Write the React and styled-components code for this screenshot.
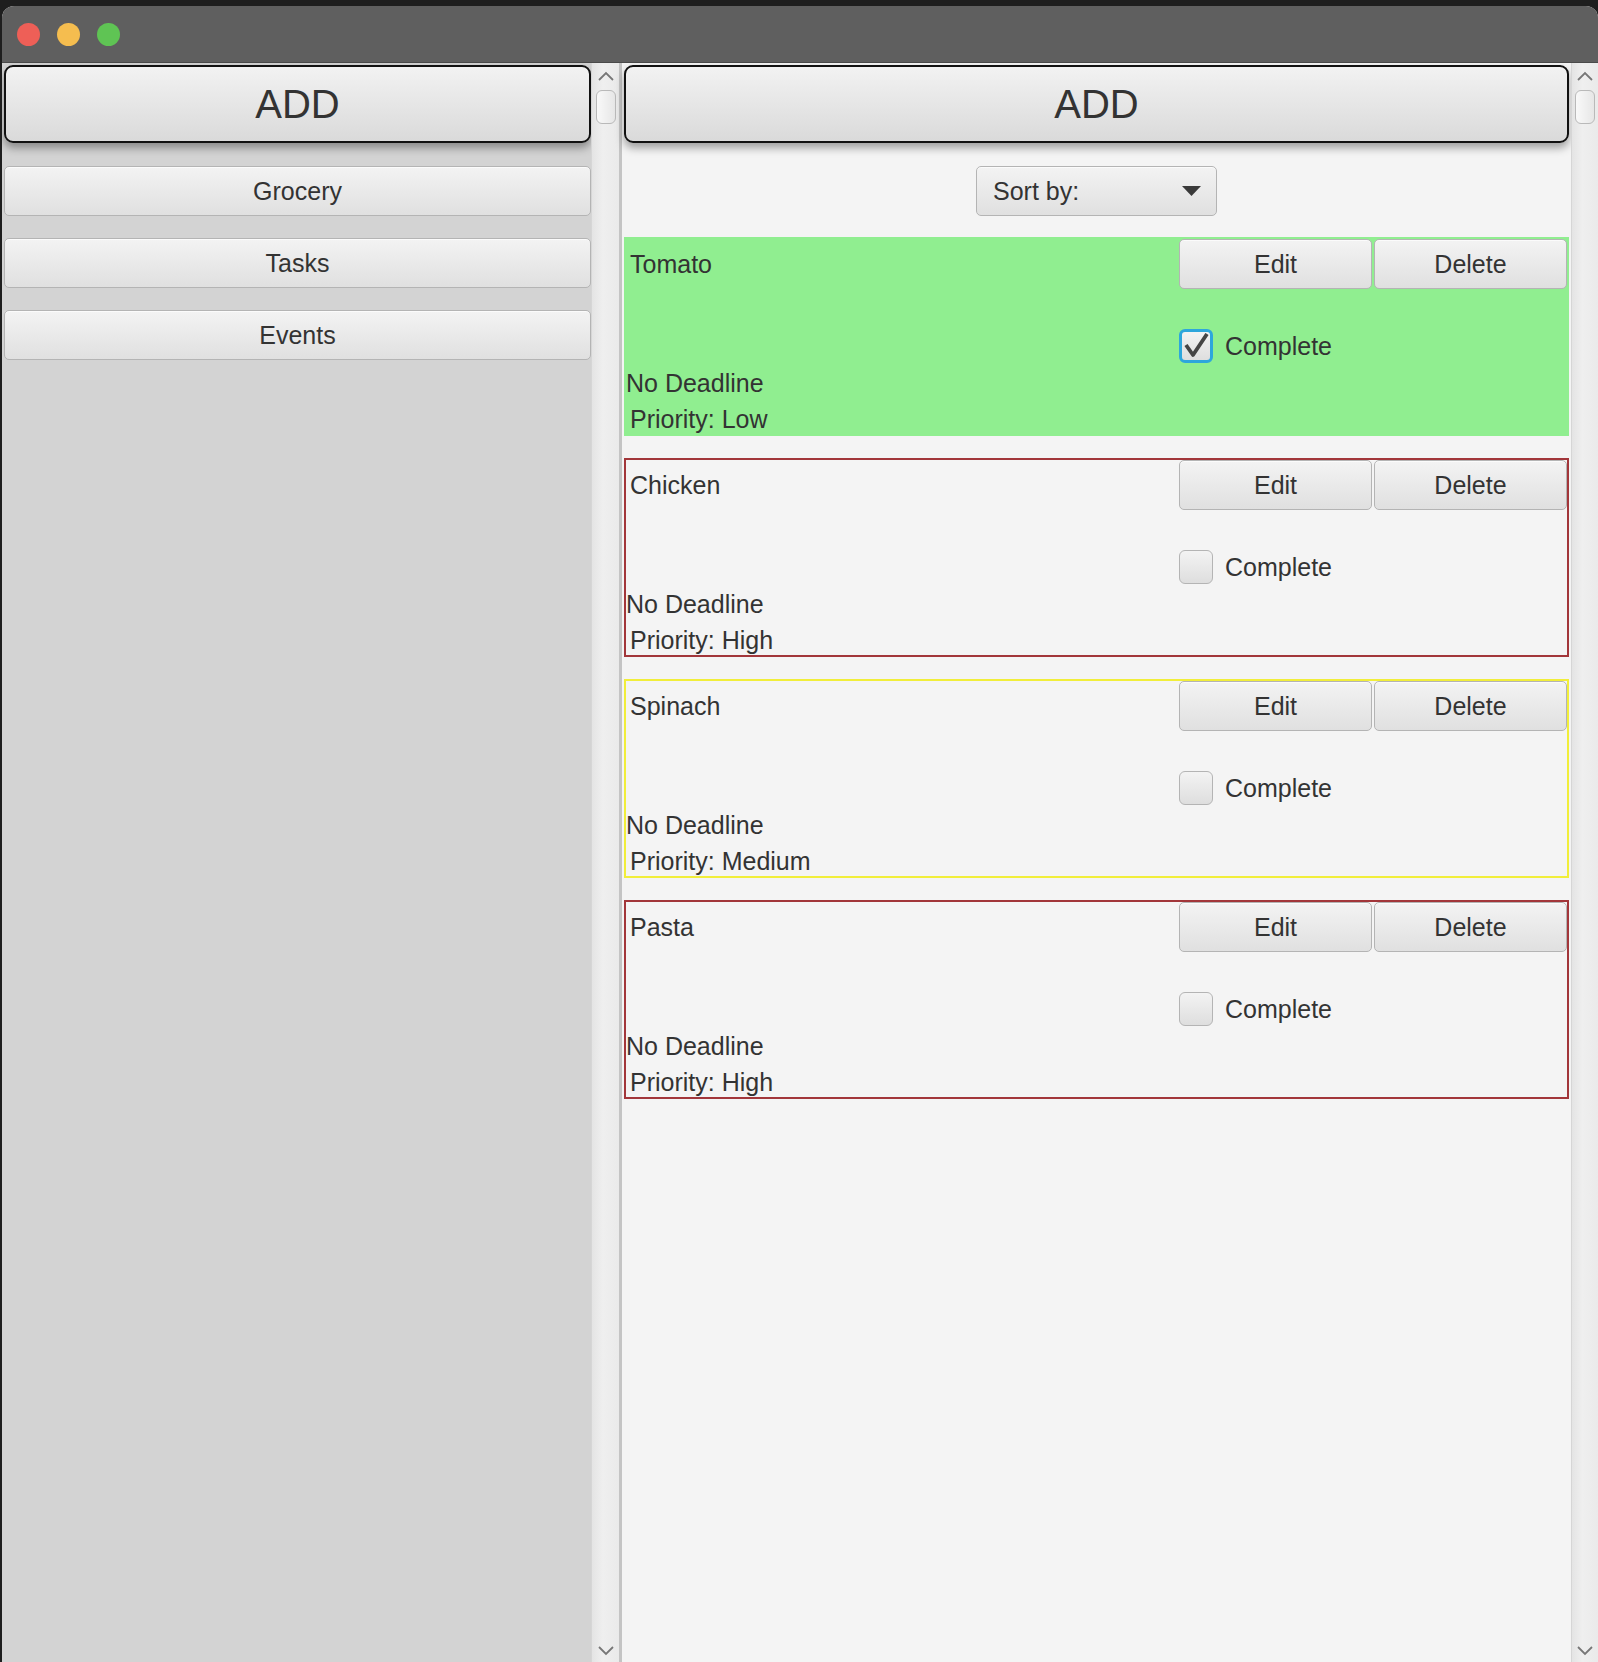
import React from 'react';
import styled, { createGlobalStyle } from 'styled-components';

const GlobalStyle = createGlobalStyle`
  html, body {
    margin: 0;
    padding: 0;
    background: #1e1e1e;
  }
  body {
    font-family: "Liberation Sans", Arial, sans-serif;
    color: #333;
    overflow: hidden;
  }
`;

const items = [
  { name: 'Tomato', deadline: 'No Deadline', priority: 'Low', done: true },
  { name: 'Chicken', deadline: 'No Deadline', priority: 'High', done: false },
  { name: 'Spinach', deadline: 'No Deadline', priority: 'Medium', done: false },
  { name: 'Pasta', deadline: 'No Deadline', priority: 'High', done: false },
];

const priorityColors = {
  High: '#a2363a',
  Medium: '#f1ee3a',
  Low: '#90ee90',
};

const App = () => {
  return (
    <>
      <GlobalStyle />
      <Window>
        <TitleBar>
          <Light color="#ee5f57" />
          <Light color="#f5bd4f" />
          <Light color="#5fc454" />
        </TitleBar>
        <Body>
          <LeftPane>
            <AddButton>ADD</AddButton>
            <ListButtons>
              <ListButton>Grocery</ListButton>
              <ListButton>Tasks</ListButton>
              <ListButton>Events</ListButton>
            </ListButtons>
          </LeftPane>
          <ScrollBar />
          <RightPane>
            <AddButton>ADD</AddButton>
            <SortRow>
              <Combo>
                <span>Sort by:</span>
                <svg width="19" height="10" viewBox="0 0 19 10">
                  <path d="M0 0 L19 0 L9.5 10 Z" fill="#3a3a3a" />
                </svg>
              </Combo>
            </SortRow>
            <CardList>
              {items.map(item => (
                <Card
                  key={item.name}
                  $done={item.done}
                  $edge={item.done ? '#90ee90' : priorityColors[item.priority]}
                >
                  <ItemName>{item.name}</ItemName>
                  <CardButton>Edit</CardButton>
                  <CardButton>Delete</CardButton>
                  <CheckRow>
                    <CheckBox $checked={item.done}>
                      {item.done && (
                        <svg width="26" height="26" viewBox="0 0 26 26">
                          <path
                            d="M3 12 L10 22 L24 1"
                            fill="none"
                            stroke="#454545"
                            strokeWidth="3.8"
                            strokeLinejoin="round"
                          />
                        </svg>
                      )}
                    </CheckBox>
                    <CheckLabel>Complete</CheckLabel>
                  </CheckRow>
                  <Deadline>{item.deadline}</Deadline>
                  <Priority>Priority: {item.priority}</Priority>
                </Card>
              ))}
            </CardList>
          </RightPane>
          <ScrollBar $narrow />
        </Body>
      </Window>
    </>
  );
};

const ScrollBar = ({ $narrow }) => (
  <Track $narrow={$narrow}>
    <Chevron width="18" height="10" viewBox="0 0 18 10">
      <path d="M2 9 L9 2 L16 9" fill="none" stroke="#777" strokeWidth="1.8" />
    </Chevron>
    <Thumb />
    <Spacer />
    <Chevron width="18" height="10" viewBox="0 0 18 10">
      <path d="M2 1 L9 8 L16 1" fill="none" stroke="#777" strokeWidth="1.8" />
    </Chevron>
  </Track>
);

export default App;

const Window = styled.div`
  margin: 6px 0 0 2px;
  width: 1596px;
  height: 1656px;
  border-radius: 12px 12px 0 0;
  overflow: hidden;
  display: flex;
  flex-direction: column;
  background: #f4f4f4;
`;

const TitleBar = styled.div`
  height: 57px;
  flex-shrink: 0;
  background: #5f5f5f;
  border-bottom: 1px solid #4a4a4a;
  box-sizing: border-box;
  display: flex;
  align-items: center;
  gap: 17px;
  padding: 0 0 0 15px;
`;

const Light = styled.div`
  width: 23px;
  height: 23px;
  border-radius: 50%;
  background: ${p => p.color};
`;

const Body = styled.div`
  flex: 1;
  display: flex;
  min-height: 0;
`;

const LeftPane = styled.div`
  width: 589px;
  flex-shrink: 0;
  background: #d3d3d3;
  box-sizing: border-box;
  padding: 2px 0 0 2px;
  display: flex;
  flex-direction: column;
`;

const RightPane = styled.div`
  width: 952px;
  flex-shrink: 0;
  box-sizing: border-box;
  background: #f4f4f4;
  border-left: 3px solid #c4c4c4;
  padding: 2px 2px 0 2px;
  display: flex;
  flex-direction: column;
`;

const AddButton = styled.button`
  height: 78px;
  width: 100%;
  box-sizing: border-box;
  border: 2px solid #111;
  border-radius: 9px;
  background: linear-gradient(#f2f2f2, #dadada);
  box-shadow: 0 5px 8px rgba(0, 0, 0, 0.35);
  font-family: "Liberation Sans", Arial, sans-serif;
  font-size: 40px;
  color: #333;
  padding: 0;
`;

const ListButtons = styled.div`
  display: flex;
  flex-direction: column;
  gap: 22px;
  margin-top: 23px;
`;

const buttonLook = `
  box-sizing: border-box;
  border: 1px solid #b4b4b4;
  border-radius: 5px;
  background: linear-gradient(#f3f3f3, #e0e0e0);
  box-shadow: inset 0 1px 0 #fbfbfb;
  font-family: "Liberation Sans", Arial, sans-serif;
  font-size: 25px;
  color: #333;
`;

const ListButton = styled.button`
  ${buttonLook}
  height: 50px;
  width: 100%;
  padding: 0;
`;

const SortRow = styled.div`
  display: flex;
  justify-content: center;
  margin-top: 23px;
`;

const Combo = styled.div`
  ${buttonLook}
  width: 241px;
  height: 50px;
  display: flex;
  align-items: center;
  justify-content: space-between;
  padding: 0 15px 0 16px;
`;

const CardList = styled.div`
  display: flex;
  flex-direction: column;
  gap: 22px;
  margin-top: 21px;
`;

const Card = styled.div`
  box-sizing: border-box;
  height: 199px;
  border: 2px solid ${p => p.$edge};
  background: ${p => (p.$done ? '#90ee90' : 'transparent')};
  display: grid;
  grid-template-columns: 1fr 193px 193px;
  grid-template-rows: 50px auto auto auto;
  column-gap: 2px;
  align-content: start;
  font-size: 25px;
`;

const ItemName = styled.div`
  align-self: center;
  padding-left: 4px;
`;

const CardButton = styled.button`
  ${buttonLook}
  height: 50px;
  padding: 0;
`;

const CheckRow = styled.div`
  grid-column: 2 / 4;
  display: flex;
  align-items: center;
  gap: 12px;
  margin-top: 40px;
`;

const CheckBox = styled.div`
  width: 34px;
  height: 34px;
  box-sizing: border-box;
  border-radius: 6px;
  background: linear-gradient(#f3f3f3, #dedede);
  border: ${p => (p.$checked ? '3px solid #2ea6dc' : '1px solid #b4b4b4')};
  display: flex;
  align-items: center;
  justify-content: center;
`;

const CheckLabel = styled.span`
  line-height: 34px;
`;

const Deadline = styled.div`
  grid-column: 1 / 4;
  line-height: 34px;
  margin-top: 3px;
`;

const Priority = styled.div`
  grid-column: 1 / 4;
  line-height: 34px;
  margin-top: 2px;
  padding-left: 4px;
`;

const Track = styled.div`
  width: ${p => (p.$narrow ? '27px' : '28px')};
  flex-shrink: 0;
  box-sizing: border-box;
  background: linear-gradient(90deg, #e4e4e4, #efefef 40%, #eaeaea);
  border-left: 1px solid #d6d6d6;
  display: flex;
  flex-direction: column;
  align-items: center;
  padding: 8px 0 6px;
`;

const Chevron = styled.svg`
  flex-shrink: 0;
`;

const Thumb = styled.div`
  width: 20px;
  height: 34px;
  margin-top: 9px;
  box-sizing: border-box;
  border: 1px solid #b9b9b9;
  border-radius: 6px;
  background: linear-gradient(90deg, #f9f9f9, #e6e6e6);
`;

const Spacer = styled.div`
  flex: 1;
`;
